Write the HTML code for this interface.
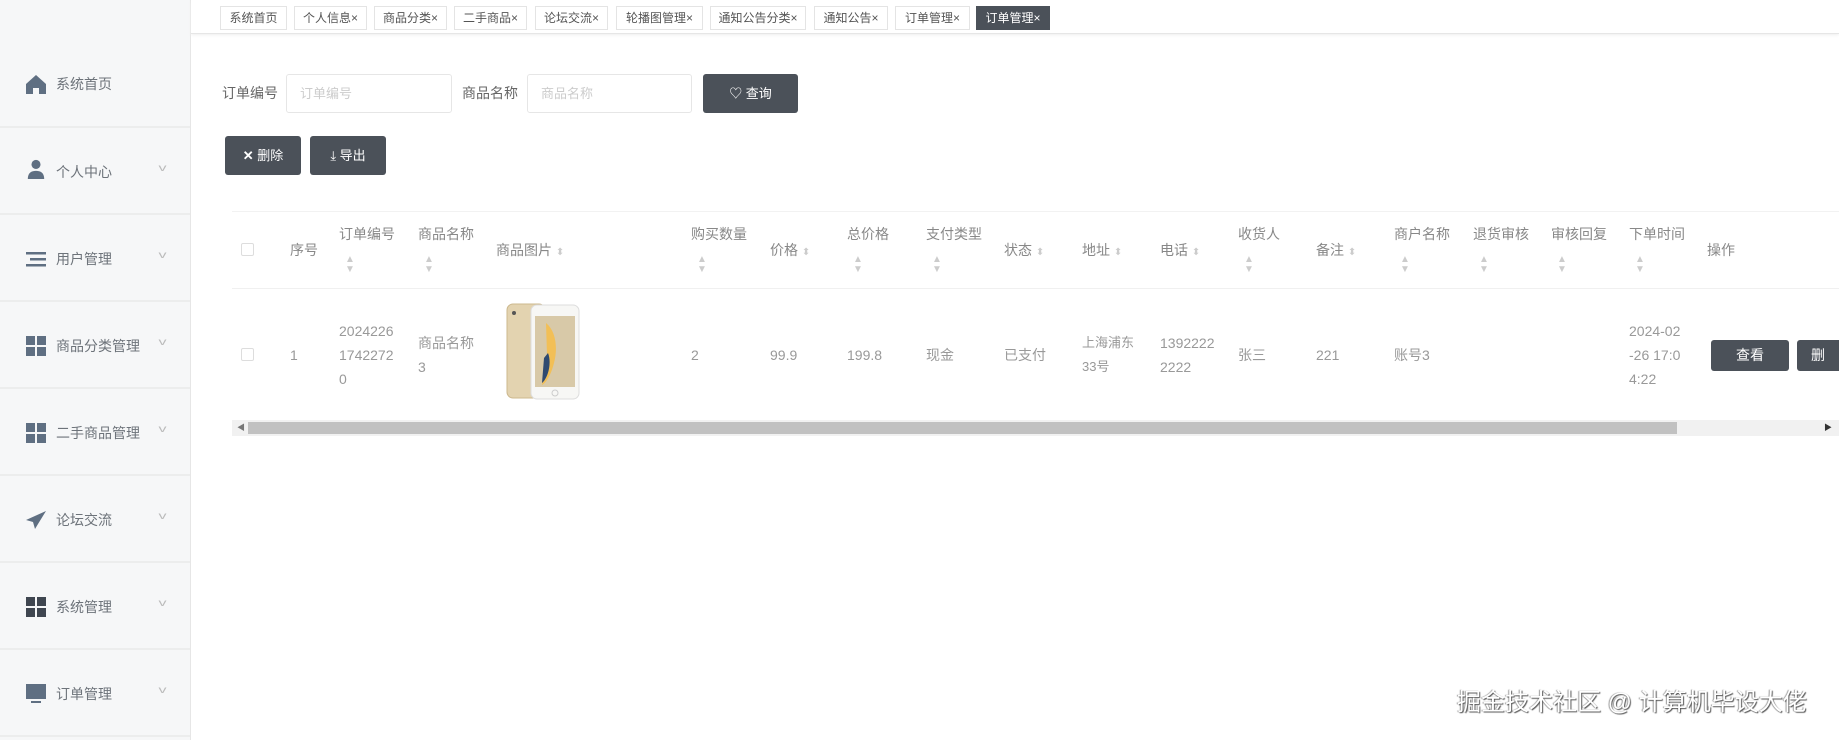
<!DOCTYPE html>
<html><head><meta charset="utf-8"><style>
*{margin:0;padding:0;box-sizing:border-box}
body{width:1839px;height:740px;overflow:hidden;background:#fff;font-family:"Liberation Sans","Noto Sans CJK SC",sans-serif;position:relative;color:#999}
.a{position:absolute}
#side{left:0;top:0;width:191px;height:740px;background:#f6f7f8;border-right:1px solid #e6e6e6}
.mi{position:absolute;left:0;width:190px;height:87px;border-bottom:2px solid #eceded}
.mi .ic{position:absolute;left:25px;top:34px;width:22px;height:20px}
.mi .t{position:absolute;left:56px;top:34px;font-size:14px;color:#6d737a;line-height:20px}
.mi .ch{position:absolute;left:160px;top:35px;font-size:10px;color:#bbb;transform:scaleX(1.6)}
.tab{position:absolute;top:6px;height:24px;border:1px solid #e4e4e4;background:#fff;font-size:12px;color:#555;line-height:22px;text-align:center;white-space:nowrap}
.lbl{font-size:14px;color:#666}
.inp{border:1px solid #e6e6e6;border-radius:3px;height:39px;font-size:13px;color:#ccc;line-height:37px;padding-left:13px}
.btn{background:#4b5159;color:#fff;font-size:13px;border-radius:3px;text-align:center}
.h{font-size:14px;color:#888;line-height:24px}
.s{font-size:10px;color:#ccc;line-height:10px}
.c{font-size:14px;color:#999;line-height:24px}
</style></head><body>
<div class="a" id="side">
 <div class="mi" style="top:0;height:128px"><svg class="ic" style="top:74px" viewBox="0 0 22 20"><path d="M11 1L1 10v10h7v-6h6v6h7V10z" fill="#5f6f82"/></svg><div class="t" style="top:74px">系统首页</div></div>
 <div class="mi" style="top:128px"><svg class="ic" style="top:31px" viewBox="0 0 22 22"><circle cx="11" cy="6" r="5" fill="#5f6f82"/><path d="M2 22c0-7 4-9 9-9s9 2 9 9z" fill="#5f6f82"/></svg><div class="t">个人中心</div><div class="ch">v</div></div>
 <div class="mi" style="top:215px"><svg class="ic" viewBox="0 0 22 20"><rect x="1" y="3" width="20" height="2.5" fill="#5f6f82"/><rect x="5" y="9" width="16" height="2.5" fill="#5f6f82"/><rect x="1" y="15" width="20" height="2.5" fill="#5f6f82"/></svg><div class="t">用户管理</div><div class="ch">v</div></div>
 <div class="mi" style="top:302px"><svg class="ic" viewBox="0 0 22 20"><rect x="1" y="0" width="9" height="9" fill="#5f6f82"/><rect x="12" y="0" width="9" height="9" fill="#5f6f82"/><rect x="1" y="11" width="9" height="9" fill="#5f6f82"/><rect x="12" y="11" width="9" height="9" fill="#5f6f82"/></svg><div class="t">商品分类管理</div><div class="ch">v</div></div>
 <div class="mi" style="top:389px"><svg class="ic" viewBox="0 0 22 20"><rect x="1" y="0" width="9" height="9" fill="#5f6f82"/><rect x="12" y="0" width="9" height="9" fill="#5f6f82"/><rect x="1" y="11" width="9" height="9" fill="#5f6f82"/><rect x="12" y="11" width="9" height="9" fill="#5f6f82"/></svg><div class="t">二手商品管理</div><div class="ch">v</div></div>
 <div class="mi" style="top:476px"><svg class="ic" viewBox="0 0 22 20"><path d="M21 1L1 10l7 2 2 7 3-5z" fill="#5f6f82"/></svg><div class="t">论坛交流</div><div class="ch">v</div></div>
 <div class="mi" style="top:563px"><svg class="ic" viewBox="0 0 22 20"><rect x="1" y="0" width="9" height="9" fill="#3f4650"/><rect x="12" y="0" width="9" height="9" fill="#3f4650"/><rect x="1" y="11" width="9" height="9" fill="#3f4650"/><rect x="12" y="11" width="9" height="9" fill="#3f4650"/></svg><div class="t">系统管理</div><div class="ch">v</div></div>
 <div class="mi" style="top:650px"><svg class="ic" viewBox="0 0 22 20"><rect x="1" y="0" width="20" height="15" fill="#5f6f82"/><rect x="6" y="17" width="10" height="2" fill="#5f6f82"/></svg><div class="t">订单管理</div><div class="ch">v</div></div>
</div>
<div class="a" style="left:191px;top:0;width:1648px;height:34px;border-bottom:1px solid #e6e6e6;box-shadow:0 1px 3px #eee"></div>
<div class="tab" style="left:220px;width:67px">系统首页</div>
<div class="tab" style="left:294px;width:73px">个人信息×</div>
<div class="tab" style="left:374px;width:73px">商品分类×</div>
<div class="tab" style="left:454px;width:73px">二手商品×</div>
<div class="tab" style="left:535px;width:73px">论坛交流×</div>
<div class="tab" style="left:616px;width:87px">轮播图管理×</div>
<div class="tab" style="left:710px;width:96px">通知公告分类×</div>
<div class="tab" style="left:814px;width:74px">通知公告×</div>
<div class="tab" style="left:895px;width:75px">订单管理×</div>
<div class="tab" style="left:976px;width:74px;background:#4b5159;color:#fff;border-color:#4b5159">订单管理×</div>

<div class="a lbl" style="left:222px;top:83px">订单编号</div>
<div class="a inp" style="left:286px;top:74px;width:166px">订单编号</div>
<div class="a lbl" style="left:462px;top:83px">商品名称</div>
<div class="a inp" style="left:527px;top:74px;width:165px">商品名称</div>
<div class="a btn" style="left:703px;top:74px;width:95px;height:39px;line-height:39px">♡ 查询</div>
<div class="a btn" style="left:225px;top:136px;width:76px;height:39px;line-height:39px"><b>✕</b> 删除</div>
<div class="a btn" style="left:310px;top:136px;width:76px;height:39px;line-height:39px">⤓ 导出</div>

<div class="a" style="left:232px;top:211px;width:1607px;height:78px;border-top:1px solid #f2f2f2;border-bottom:1px solid #f0f0f0"></div>
<div class="a" style="left:241px;top:243px;width:13px;height:13px;border:1px solid #ddd;border-radius:2px"></div>
<div class="a h" style="left:290px;top:238px">序号</div>
<div class="a h" style="left:339px;top:222px">订单编号</div><div class="a s" style="left:345px;top:255px">▲<br>▼</div>
<div class="a h" style="left:418px;top:222px">商品名称</div><div class="a s" style="left:424px;top:255px">▲<br>▼</div>
<div class="a h" style="left:496px;top:238px">商品图片 <span style="font-size:10px;color:#ccc">⬍</span></div>
<div class="a h" style="left:691px;top:222px">购买数量</div><div class="a s" style="left:697px;top:255px">▲<br>▼</div>
<div class="a h" style="left:770px;top:238px">价格 <span style="font-size:10px;color:#ccc">⬍</span></div>
<div class="a h" style="left:847px;top:222px">总价格</div><div class="a s" style="left:853px;top:255px">▲<br>▼</div>
<div class="a h" style="left:926px;top:222px">支付类型</div><div class="a s" style="left:932px;top:255px">▲<br>▼</div>
<div class="a h" style="left:1004px;top:238px">状态 <span style="font-size:10px;color:#ccc">⬍</span></div>
<div class="a h" style="left:1082px;top:238px">地址 <span style="font-size:10px;color:#ccc">⬍</span></div>
<div class="a h" style="left:1160px;top:238px">电话 <span style="font-size:10px;color:#ccc">⬍</span></div>
<div class="a h" style="left:1238px;top:222px">收货人</div><div class="a s" style="left:1244px;top:255px">▲<br>▼</div>
<div class="a h" style="left:1316px;top:238px">备注 <span style="font-size:10px;color:#ccc">⬍</span></div>
<div class="a h" style="left:1394px;top:222px">商户名称</div><div class="a s" style="left:1400px;top:255px">▲<br>▼</div>
<div class="a h" style="left:1473px;top:222px">退货审核</div><div class="a s" style="left:1479px;top:255px">▲<br>▼</div>
<div class="a h" style="left:1551px;top:222px">审核回复</div><div class="a s" style="left:1557px;top:255px">▲<br>▼</div>
<div class="a h" style="left:1629px;top:222px">下单时间</div><div class="a s" style="left:1635px;top:255px">▲<br>▼</div>
<div class="a h" style="left:1707px;top:238px">操作</div>

<div class="a" style="left:241px;top:348px;width:13px;height:13px;border:1px solid #ddd;border-radius:2px"></div>
<div class="a c" style="left:290px;top:343px">1</div>
<div class="a c" style="left:339px;top:319px">2024226<br>1742272<br>0</div>
<div class="a c" style="left:418px;top:331px">商品名称<br>3</div>
<svg class="a" style="left:506px;top:303px" width="75" height="97" viewBox="0 0 75 97"><rect x="1" y="1" width="38" height="94" rx="6" fill="#e3d3b0" stroke="#ccb88e"/><rect x="25" y="2" width="48" height="94" rx="6" fill="#f7f7f5" stroke="#ddd"/><rect x="29" y="13" width="40" height="71" fill="#d8c9a8"/><path d="M40 20c10 8 12 25 8 40-3 12-8 20-12 22l5-30z" fill="#f2bf56"/><path d="M42 50c4 10 0 25-6 30l2-25z" fill="#2f4a70"/><circle cx="49" cy="90" r="3" fill="none" stroke="#ccc"/><circle cx="8" cy="10" r="2" fill="#555"/></svg>
<div class="a c" style="left:691px;top:343px">2</div>
<div class="a c" style="left:770px;top:343px">99.9</div>
<div class="a c" style="left:847px;top:343px">199.8</div>
<div class="a c" style="left:926px;top:343px">现金</div>
<div class="a c" style="left:1004px;top:343px">已支付</div>
<div class="a c" style="left:1082px;top:331px;font-size:13px">上海浦东<br>33号</div>
<div class="a c" style="left:1160px;top:331px">1392222<br>2222</div>
<div class="a c" style="left:1238px;top:343px">张三</div>
<div class="a c" style="left:1316px;top:343px">221</div>
<div class="a c" style="left:1394px;top:343px">账号3</div>
<div class="a c" style="left:1629px;top:319px">2024-02<br>-26 17:0<br>4:22</div>
<div class="a btn" style="left:1711px;top:340px;width:78px;height:31px;line-height:31px;font-size:14px">查看</div>
<div class="a btn" style="left:1797px;top:340px;width:42px;height:31px;line-height:31px;font-size:14px;border-radius:3px 0 0 3px">删</div>

<div class="a" style="left:232px;top:420px;width:1607px;height:16px;background:#f1f1f1"></div>
<div class="a" style="left:248px;top:422px;width:1429px;height:12px;background:#c1c1c1"></div>
<div class="a" style="left:237px;top:422px;font-size:8px;color:#777">◀</div>
<div class="a" style="left:1824px;top:422px;font-size:8px;color:#333">▶</div>

<div class="a" style="left:1457px;top:689px;font-size:24px;color:#fff;text-shadow:1px 1px 1px #555,-1px 0 1px #999;white-space:nowrap;line-height:28px">掘金技术社区 @ 计算机毕设大佬</div>
</body></html>
